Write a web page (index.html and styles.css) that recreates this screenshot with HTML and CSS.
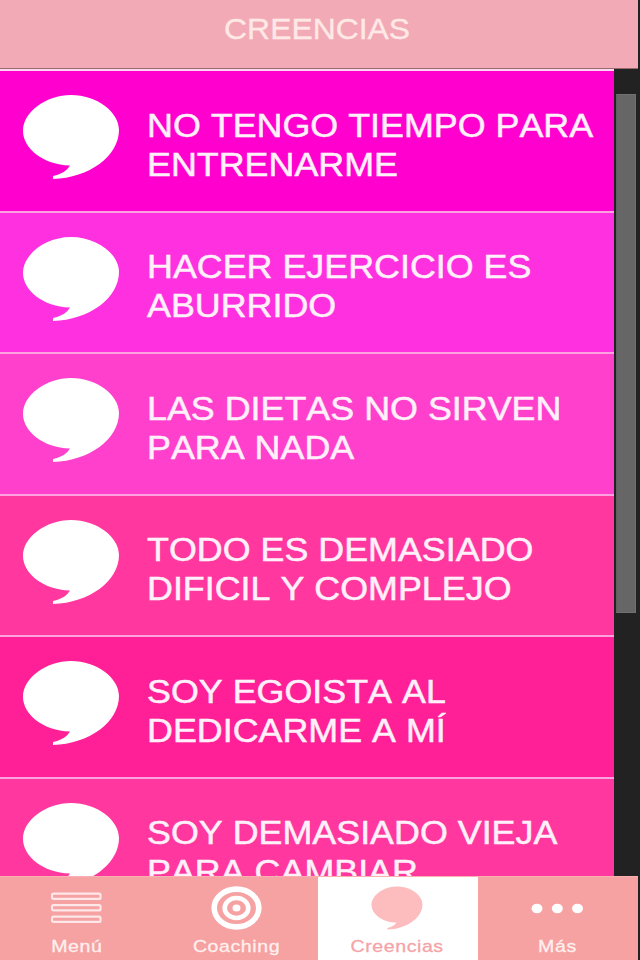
FILE: index.html
```html
<!DOCTYPE html>
<html lang="es">
<head>
<meta charset="utf-8">
<title>Creencias</title>
<link rel="stylesheet" href="styles.css">
</head>
<body>
<svg class="defs" width="0" height="0"><symbol id="bubble" viewBox="0 0 98 86" preserveAspectRatio="none"><path d="M49 1C24 1 1 18 1 37C1 54 21 71 48 71.500C45 76.500 40 80 31 82V85C67 84 97 62 97 36C97 18 75 1 49 1Z"/></symbol></svg>
<div class="app">
<header class="header"><h1 class="title">CREENCIAS</h1></header>
<main class="content">
<ul class="list">
<li class="row c1"><svg class="bubble"><use href="#bubble"/></svg><p class="text">NO TENGO TIEMPO PARA<br>ENTRENARME</p></li>
<li class="row c2"><svg class="bubble"><use href="#bubble"/></svg><p class="text">HACER EJERCICIO ES<br>ABURRIDO</p></li>
<li class="row c3"><svg class="bubble"><use href="#bubble"/></svg><p class="text">LAS DIETAS NO SIRVEN<br>PARA NADA</p></li>
<li class="row c4"><svg class="bubble"><use href="#bubble"/></svg><p class="text">TODO ES DEMASIADO<br>DIFICIL Y COMPLEJO</p></li>
<li class="row c5"><svg class="bubble"><use href="#bubble"/></svg><p class="text">SOY EGOISTA AL<br>DEDICARME A MÍ</p></li>
<li class="row c4"><svg class="bubble"><use href="#bubble"/></svg><p class="text">SOY DEMASIADO VIEJA<br>PARA CAMBIAR</p></li>
</ul>
<div class="track"><div class="thumb"></div></div>
</main>
<nav class="tabs">
<a class="tab"><svg class="icon" viewBox="0 0 52 44"><g fill="none" stroke="#fff" stroke-opacity=".75" stroke-width="2.200"><rect x="1" y="7.700" width="48.500" height="5.200" rx="1.500"/><rect x="1" y="19.200" width="48.500" height="5.200" rx="1.500"/><rect x="1" y="30.700" width="48.500" height="5.200" rx="1.500"/></g></svg><span class="label">Menú</span></a>
<a class="tab"><svg class="icon" viewBox="0 0 52 44"><g fill="none" stroke="#fff"><ellipse cx="26.500" cy="22" rx="22.300" ry="18.900" stroke-width="5.600"/><ellipse cx="26.500" cy="22" rx="11.800" ry="10" stroke-width="4.600"/></g><ellipse cx="26.500" cy="22" rx="4" ry="3.500" fill="#fff"/></svg><span class="label">Coaching</span></a>
<a class="tab active"><svg class="icon"><use href="#bubble"/></svg><span class="label">Creencias</span></a>
<a class="tab"><svg class="icon" viewBox="0 0 52 44"><g fill="#fff"><ellipse cx="6" cy="22.500" rx="5.500" ry="4.800"/><ellipse cx="26.300" cy="22.500" rx="5.500" ry="4.800"/><ellipse cx="46.500" cy="22.500" rx="5.500" ry="4.800"/></g></svg><span class="label">Más</span></a>
</nav>
</div>
</body>
</html>
```
FILE: styles.css
```css
* { box-sizing: border-box; }
body { margin: 0; background: #222; font-family: "Liberation Sans", Arial, sans-serif; font-kerning: none; }
.defs { display: block; }
.app { width: 640px; height: 960px; display: flex; flex-direction: column; overflow: hidden; }
.header { width: 638px; height: 69px; flex: none; background: #f2abb6; border-bottom: 1px solid #956c70; padding-bottom: 10px; display: flex; align-items: center; justify-content: center; }
.title { margin: 0; font-size: 29.500px; font-weight: 400; line-height: 34px; color: #ffe9e7; -webkit-text-stroke: .3px #ffe9e7; transform: translateX(-2px) scaleX(1.08); }
.content { height: 807px; flex: none; display: flex; overflow: hidden; }
.list { width: 614px; flex: none; margin: 0; padding: 0.400px 0 0; list-style: none; background: #ffd5f2; }
.row { height: 141.500px; border-top: 2px solid #ffa0e0; padding: 23px 0 0 22px; display: flex; color: #fff; }
.bubble { width: 98px; height: 86px; flex: none; fill: #fff; }
.text { margin: 12.500px 0 0 26.500px; font-size: 32.500px; line-height: 39px; white-space: nowrap; color: #fff0fa; -webkit-text-stroke: .5px #fff0fa; transform: scaleX(1.103); transform-origin: 0 0; }
.c1 { background: #ff00ce; border-top-color: #ffd5f2; }
.c2 { background: #ff30df; }
.c3 { background: #ff40cd; }
.c4 { background: #ff379e; }
.c5 { background: #ff1f97; }
.track { width: 26px; padding: 25px 4px 0 2px; background: #222; }
.thumb { height: 519px; background: #666; border: 1px solid #707070; border-left-color: #606060; }
.tabs { width: 638px; height: 84px; flex: none; display: grid; grid-template-columns: 158px 160px 160px 160px; background: #f6a1a2; border-top: 1px solid #f8b1b0; }
.tab { padding-top: 9px; display: flex; flex-direction: column; align-items: center; color: #fff0ee; }
.tab:first-child { padding-right: 5px; }
.tab:nth-child(2) { padding-right: 4px; }
.tab:nth-child(3), .tab:nth-child(4) { padding-right: 2px; }
.icon { width: 52px; height: 44px; flex: none; }
.label { margin-top: 7px; font-size: 17px; line-height: 20px; letter-spacing: .5px; -webkit-text-stroke: .3px currentColor; transform: translateX(.6px) scaleX(1.15); }
.active { background: #fff; color: #f5a3a6; }
.active .icon { fill: #fdbdbf; }
```
